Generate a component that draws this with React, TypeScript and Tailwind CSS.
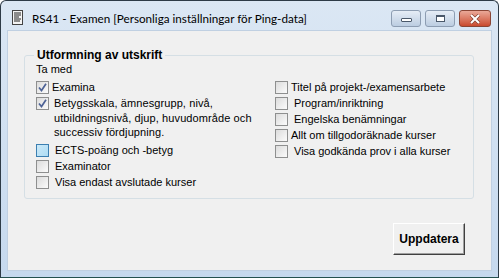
import React from 'react';

const Box = ({ checked = false, hover = false }: { checked?: boolean; hover?: boolean }) => (
  <span
    className={
      'relative flex h-[13px] w-[13px] shrink-0 items-center justify-center border ' +
      (hover
        ? 'border-[#3c7fb1] bg-gradient-to-br from-[#cbe9f8] to-[#aedcf4]'
        : 'border-[#8e8f8f] bg-gradient-to-br from-[#dcdcdc] to-[#fbfbfb]')
    }
  >
    {checked && (
      <svg width="9" height="9" viewBox="0 0 9 9">
        <path d="M1 4.5 L3.5 7.5 L8 0.8" fill="none" stroke="#4d6296" strokeWidth="1.7" />
      </svg>
    )}
  </span>
);

const Row = ({ label, checked, hover, indent = 0 }: { label: string; checked?: boolean; hover?: boolean; indent?: number }) => (
  <div className="flex h-[16px] items-center">
    <Box checked={checked} hover={hover} />
    <span className={indent ? 'ml-[6px]' : 'ml-[3px]'}>{label}</span>
  </div>
);

export default function App() {
  return (
    <div className="h-[279px] w-[502px] overflow-hidden bg-white" style={{ fontFamily: '"Liberation Sans", Arial, sans-serif' }}>
      <div className="flex h-[278px] w-[499px] flex-col rounded-t-[6px] border border-[#2e3b47] border-b-[#24504f] bg-gradient-to-b from-[#dbe7f4] to-[#c6d9ee]">
        {/* title bar */}
        <div className="flex h-[29px] shrink-0 items-start pl-[11px] pr-[7px]">
          <svg className="mt-[9px]" width="11" height="15" viewBox="0 0 11 15">
            <rect x="0.5" y="0.5" width="10" height="14" fill="#f4f4f4" stroke="#444" />
            <path d="M2 3h7M2 5h7M2 7h5M2 9h7M2 11h6" stroke="#222" strokeWidth="1" />
          </svg>
          <span className="ml-[9px] mt-[9px] text-[11.7px] leading-[16px] text-black" style={{ fontFamily: 'Lato, sans-serif' }}>
            RS41 - Examen [Personliga inställningar för Ping-data]
          </span>
          <div className="ml-auto mt-[9px] flex gap-[4px]">
            <div className="flex h-[17px] w-[30px] items-end justify-center rounded-[3px] border border-[#8d9db2] bg-gradient-to-b from-[#e6edf6] to-[#bccde1] pb-[4px]">
              <span className="h-[4px] w-[11px] rounded-[1px] border border-[#4a586a] bg-white" />
            </div>
            <div className="flex h-[17px] w-[30px] items-center justify-center rounded-[3px] border border-[#8d9db2] bg-gradient-to-b from-[#e6edf6] to-[#bccde1]">
              <span className="h-[7px] w-[9px] border border-t-[2px] border-[#4a586a] bg-white" />
            </div>
            <div className="flex h-[17px] w-[32px] items-center justify-center rounded-[3px] border border-[#8a4535] bg-gradient-to-b from-[#e9a898] to-[#c9492d]">
              <svg width="12" height="10" viewBox="0 0 12 10">
                <path d="M2 1 L10 9 M10 1 L2 9" stroke="#7a3a2a" strokeWidth="3.2" />
                <path d="M2 1 L10 9 M10 1 L2 9" stroke="#fff" strokeWidth="2" />
              </svg>
            </div>
          </div>
        </div>

        {/* client area */}
        <div className="mx-[6px] mb-[6px] flex flex-1 flex-col border border-[#c0d0e2] bg-[#f0f0f0] pl-[16px] pr-[17px] text-[11px] text-black">
          <fieldset className="mt-[17px] rounded-[3px] border border-[#d5dfe5] pb-[7px] pl-[11px]">
            <legend className="-ml-[2px] px-[3px] text-[12px] font-bold leading-[14px]">Utformning av utskrift</legend>
            <div className="leading-[14px]">Ta med</div>
            <div className="mt-[3px] flex">
              <div className="flex w-[239px] flex-col">
                <Row label="Examina" checked />
                <div className="flex items-start pt-[1px]">
                  <span className="mt-[1px]">
                    <Box checked />
                  </span>
                  <span className="ml-[5px] leading-[14.5px] tracking-[0.1px]">
                    Betygsskala, ämnesgrupp, nivå,
                    <br />
                    utbildningsnivå, djup, huvudområde och
                    <br />
                    successiv fördjupning.
                  </span>
                </div>
                <div className="mt-[3px]">
                  <Row label="ECTS-poäng och -betyg" hover indent={1} />
                  <Row label="Examinator" indent={1} />
                  <Row label="Visa endast avslutade kurser" indent={1} />
                </div>
              </div>
              <div className="flex flex-col">
                <Row label="Titel på projekt-/examensarbete" />
                <Row label="Program/inriktning" indent={1} />
                <Row label="Engelska benämningar" indent={1} />
                <Row label="Allt om tillgodoräknade kurser" />
                <Row label="Visa godkända prov i alla kurser" indent={1} />
              </div>
            </div>
          </fieldset>
          <div className="mt-[24px] flex justify-end pr-[9px]">
            <button className="h-[32px] w-[72px] border border-b-[#404040] border-l-white border-r-[#404040] border-t-white bg-[#f0f0f0] text-[12px] font-bold shadow-[inset_-1px_-1px_0_#a0a0a0]">
              Uppdatera
            </button>
          </div>
        </div>
      </div>
    </div>
  );
}
